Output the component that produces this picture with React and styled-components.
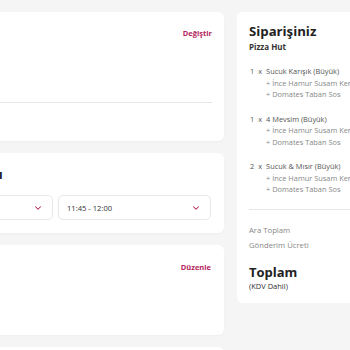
import React from "react";
import styled, { createGlobalStyle } from "styled-components";
import { ChevronDown } from "lucide-react";

const GlobalStyle = createGlobalStyle`
  html, body {
    margin: 0;
    padding: 0;
    background: #f5f5f5;
    font-family: "Open Sans", "Noto Sans", sans-serif;
    overflow: hidden;
  }
`;

const Page = styled.div`
  display: flex;
  gap: 13px;
  align-items: flex-start;
  padding-top: 12px;
  margin-left: -125px;
  width: 800px;
`;

const LeftColumn = styled.div`
  width: 349px;
  display: flex;
  flex-direction: column;
  gap: 12px;
  flex-shrink: 0;
`;

const Card = styled.section`
  background: #fff;
  border-radius: 6px;
  box-shadow: 0 1px 2px rgba(0, 0, 0, 0.03);
  box-sizing: border-box;
  min-height: ${(p) => p.$height}px;
  padding: ${(p) => p.$padding || "14px 12px 12px 20px"};
`;

const CardHeader = styled.div`
  display: flex;
  justify-content: space-between;
  align-items: center;
  height: 12px;
  margin-top: 1px;
`;

const CardTitle = styled.h2`
  margin: 0;
  font-size: 13px;
  line-height: 14px;
  font-weight: 700;
  color: #222;
  white-space: nowrap;
`;

const ActionLink = styled.a`
  font-size: 7.5px;
  font-weight: 700;
  color: #b3265f;
  text-decoration: none;
  cursor: pointer;
`;

const Divider = styled.hr`
  border: none;
  border-top: 1px solid #e6e6e6;
  margin: ${(p) => p.$margin};
`;

const SelectRow = styled.div`
  display: flex;
  gap: 5px;
  margin-top: 14px;
  justify-content: flex-end;
  padding-right: 1px;
`;

const Select = styled.div`
  box-sizing: border-box;
  width: ${(p) => p.$width}px;
  height: 25px;
  border: 1px solid #e8e8e8;
  border-radius: 5px;
  display: flex;
  align-items: center;
  justify-content: space-between;
  padding: 0 9px 0 8px;
  font-size: 7.6px;
  color: #333;
`;

const RightCard = styled.aside`
  width: 300px;
  flex-shrink: 0;
  background: #fff;
  border-radius: 6px;
  box-sizing: border-box;
  min-height: 291px;
  padding: 10px 12px 12px 12px;
`;

const OrderTitle = styled.h1`
  margin: 0;
  font-size: 13.2px;
  line-height: 19px;
  font-weight: 700;
  color: #222;
`;

const Restaurant = styled.div`
  font-size: 8px;
  font-weight: 700;
  color: #333;
  line-height: 11px;
`;

const ItemList = styled.div`
  margin-top: 14px;
  display: flex;
  flex-direction: column;
  gap: 13px;
`;

const Item = styled.div`
  font-size: 7.4px;
  color: #555;
  line-height: 11.5px;
`;

const ItemMain = styled.div`
  display: flex;
  gap: 4px;
  padding-left: 1px;
`;

const Extra = styled.div`
  padding-left: 17px;
  color: #888;
  white-space: nowrap;
`;

const SummaryLine = styled.div`
  font-size: 7.7px;
  color: #888;
  line-height: 15px;
`;

const TotalTitle = styled.div`
  margin-top: 11px;
  font-size: 13px;
  font-weight: 700;
  color: #222;
  line-height: 17px;
`;

const TotalNote = styled.div`
  font-size: 7.5px;
  color: #333;
  line-height: 10px;
`;

const items = [
  { qty: 1, name: "Sucuk Karışık (Büyük)" },
  { qty: 1, name: "4 Mevsim (Büyük)" },
  { qty: 2, name: "Sucuk & Mısır (Büyük)" },
];

export default function App() {
  return (
    <>
      <GlobalStyle />
      <Page>
        <LeftColumn>
          <Card $height={129}>
            <CardHeader>
              <CardTitle>Adres</CardTitle>
              <ActionLink>Değiştir</ActionLink>
            </CardHeader>
            <Divider $margin="63px 0 0 0" />
          </Card>
          <Card $height={80}>
            <CardTitle>Teslimat Zamanı</CardTitle>
            <SelectRow>
              <Select $width={160}>
                <span>Bugün</span>
                <ChevronDown size={10} strokeWidth={2.5} color="#b3265f" />
              </Select>
              <Select $width={155}>
                <span>11:45 - 12:00</span>
                <ChevronDown size={10} strokeWidth={2.5} color="#b3265f" />
              </Select>
            </SelectRow>
          </Card>
          <Card $height={90} $padding="15px 13px 12px 20px">
            <CardHeader>
              <CardTitle>Ödeme</CardTitle>
              <ActionLink>Düzenle</ActionLink>
            </CardHeader>
          </Card>
          <Card $height={80} />
        </LeftColumn>
        <RightCard>
          <OrderTitle>Siparişiniz</OrderTitle>
          <Restaurant>Pizza Hut</Restaurant>
          <ItemList>
            {items.map((it, i) => (
              <Item key={i}>
                <ItemMain>
                  <span>{it.qty}</span>
                  <span>x</span>
                  <span>{it.name}</span>
                </ItemMain>
                <Extra>+ İnce Hamur Susam Kenar</Extra>
                <Extra>+ Domates Taban Sos</Extra>
              </Item>
            ))}
          </ItemList>
          <Divider $margin="13px 0 13px 0" />
          <SummaryLine>Ara Toplam</SummaryLine>
          <SummaryLine>Gönderim Ücreti</SummaryLine>
          <TotalTitle>Toplam</TotalTitle>
          <TotalNote>(KDV Dahil)</TotalNote>
        </RightCard>
      </Page>
    </>
  );
}
